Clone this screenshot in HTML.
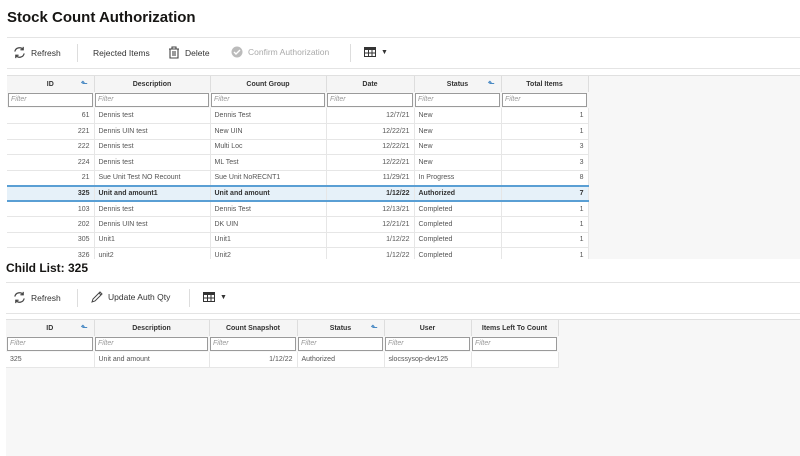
<!DOCTYPE html>
<html><head><meta charset="utf-8"><style>
*{margin:0;padding:0;box-sizing:border-box}
body{width:800px;height:456px;overflow:hidden;background:#fff;font-family:"Liberation Sans",sans-serif;color:#333;position:relative}
h1{position:absolute;left:7px;top:9px;font-size:15px;font-weight:bold;color:#161513}
h2{position:absolute;left:6px;top:261px;font-size:12px;font-weight:bold;color:#161513}
.line{position:absolute;height:1px;background:#e4e4e4}
.tb{position:absolute;font-size:8.5px;color:#333;display:flex;align-items:center;gap:5px}
.sep{position:absolute;width:1px;background:#ddd}
.grid{position:absolute;background:#f7f7f7;border-top:1px solid #e0e0e0;overflow:hidden}
table{border-collapse:collapse;font-size:7px;table-layout:fixed}
th{height:16px;font-weight:bold;color:#333;border-right:1px solid #ddd;background:#f5f5f5;font-size:7px;position:relative}
td.f{height:16px;padding:1px}
td.f div{border:1px solid #9a9a9a;height:14px;background:#fff;font-style:italic;color:#999;padding-left:2px;line-height:12px;font-size:7px}
tr.r td{height:15.5px;background:#fff;border-right:1px solid #e6e6e6;border-bottom:1px solid #e6e6e6;padding:0 4px;white-space:nowrap;overflow:hidden;color:#555}
tr.sel td{background:#e6f1f9;font-weight:bold;color:#333;border-top:2px solid #5a9fd4;border-bottom:2px solid #5a9fd4}
.n{text-align:right}
.ar{position:absolute;right:6px;top:3px;color:#4a8ac4;font-size:8px}
</style></head><body>
<h1>Stock Count Authorization</h1>
<div class="line" style="left:7px;top:37px;width:793px"></div>
<div class="tb" style="left:13px;top:46px"><svg width="13" height="13" viewBox="0 0 14 14" fill="none" stroke="#444" stroke-width="1.3"><path d="M2 6a5 5 0 0 1 9-2M12 8a5 5 0 0 1-9 2"/><path d="M11 1v3h-3M3 13v-3h3"/></svg><span>Refresh</span></div>
<div class="sep" style="left:77px;top:44px;height:18px"></div>
<div class="tb" style="left:93px;top:48px">Rejected Items</div>
<div class="tb" style="left:168px;top:46px"><svg width="12" height="13" viewBox="0 0 12 13" fill="none" stroke="#444" stroke-width="1.1"><path d="M1 3h10M4 3V1h4v2M2 3v9h8V3M5 5v5M7 5v5"/></svg><span>Delete</span></div>
<div class="tb" style="left:231px;top:46px;color:#aaa"><svg width="12" height="12" viewBox="0 0 12 12"><circle cx="6" cy="6" r="5.5" fill="#bbb"/><path d="M3 6l2 2 4-4" stroke="#fff" stroke-width="1.4" fill="none"/></svg><span>Confirm Authorization</span></div>
<div class="sep" style="left:350px;top:44px;height:18px"></div>
<div class="tb" style="left:364px;top:47px"><svg width="12" height="10" viewBox="0 0 12 10"><rect x=".5" y=".5" width="11" height="9" fill="none" stroke="#333"/><rect x=".5" y=".5" width="11" height="2.5" fill="#333"/><path d="M4.5 3v7M8 3v7M0 6h12" stroke="#333"/></svg><span style="font-size:7px">▼</span></div>
<div class="line" style="left:7px;top:68px;width:793px"></div>

<div class="grid" style="left:7px;top:75px;width:793px;height:184px">
<table style="width:581px">
<colgroup><col style="width:87px"><col style="width:116px"><col style="width:116px"><col style="width:88px"><col style="width:87px"><col style="width:87px"></colgroup>
<tr><th>ID<span class="ar">⬑</span></th><th>Description</th><th>Count Group</th><th>Date</th><th>Status<span class="ar">⬑</span></th><th>Total Items</th></tr>
<tr><td class="f"><div>Filter</div></td><td class="f"><div>Filter</div></td><td class="f"><div>Filter</div></td><td class="f"><div>Filter</div></td><td class="f"><div>Filter</div></td><td class="f"><div>Filter</div></td></tr>
<tr class="r"><td class="n">61</td><td>Dennis test</td><td>Dennis Test</td><td class="n">12/7/21</td><td>New</td><td class="n">1</td></tr>
<tr class="r"><td class="n">221</td><td>Dennis UIN test</td><td>New UIN</td><td class="n">12/22/21</td><td>New</td><td class="n">1</td></tr>
<tr class="r"><td class="n">222</td><td>Dennis test</td><td>Multi Loc</td><td class="n">12/22/21</td><td>New</td><td class="n">3</td></tr>
<tr class="r"><td class="n">224</td><td>Dennis test</td><td>ML Test</td><td class="n">12/22/21</td><td>New</td><td class="n">3</td></tr>
<tr class="r"><td class="n">21</td><td>Sue Unit Test NO Recount</td><td>Sue Unit NoRECNT1</td><td class="n">11/29/21</td><td>In Progress</td><td class="n">8</td></tr>
<tr class="r sel"><td class="n">325</td><td>Unit and amount1</td><td>Unit and amount</td><td class="n">1/12/22</td><td>Authorized</td><td class="n">7</td></tr>
<tr class="r"><td class="n">103</td><td>Dennis test</td><td>Dennis Test</td><td class="n">12/13/21</td><td>Completed</td><td class="n">1</td></tr>
<tr class="r"><td class="n">202</td><td>Dennis UIN test</td><td>DK UIN</td><td class="n">12/21/21</td><td>Completed</td><td class="n">1</td></tr>
<tr class="r"><td class="n">305</td><td>Unit1</td><td>Unit1</td><td class="n">1/12/22</td><td>Completed</td><td class="n">1</td></tr>
<tr class="r"><td class="n">326</td><td>unit2</td><td>Unit2</td><td class="n">1/12/22</td><td>Completed</td><td class="n">1</td></tr>
</table></div>

<h2>Child List: 325</h2>
<div class="line" style="left:6px;top:282px;width:794px"></div>
<div class="tb" style="left:13px;top:291px"><svg width="13" height="13" viewBox="0 0 14 14" fill="none" stroke="#444" stroke-width="1.3"><path d="M2 6a5 5 0 0 1 9-2M12 8a5 5 0 0 1-9 2"/><path d="M11 1v3h-3M3 13v-3h3"/></svg><span>Refresh</span></div>
<div class="sep" style="left:77px;top:289px;height:18px"></div>
<div class="tb" style="left:91px;top:291px"><svg width="12" height="12" viewBox="0 0 12 12" fill="none" stroke="#444" stroke-width="1"><path d="M1 11l1-3 7-7 2 2-7 7zM8 2l2 2"/></svg><span>Update Auth Qty</span></div>
<div class="sep" style="left:189px;top:289px;height:18px"></div>
<div class="tb" style="left:203px;top:292px"><svg width="12" height="10" viewBox="0 0 12 10"><rect x=".5" y=".5" width="11" height="9" fill="none" stroke="#333"/><rect x=".5" y=".5" width="11" height="2.5" fill="#333"/><path d="M4.5 3v7M8 3v7M0 6h12" stroke="#333"/></svg><span style="font-size:7px">▼</span></div>
<div class="line" style="left:6px;top:313px;width:794px"></div>

<div class="grid" style="left:6px;top:319px;width:794px;height:137px">
<table style="width:552px">
<colgroup><col style="width:88px"><col style="width:115px"><col style="width:88px"><col style="width:87px"><col style="width:87px"><col style="width:87px"></colgroup>
<tr><th>ID<span class="ar">⬑</span></th><th>Description</th><th>Count Snapshot</th><th>Status<span class="ar">⬑</span></th><th>User</th><th>Items Left To Count</th></tr>
<tr><td class="f"><div>Filter</div></td><td class="f"><div>Filter</div></td><td class="f"><div>Filter</div></td><td class="f"><div>Filter</div></td><td class="f"><div>Filter</div></td><td class="f"><div>Filter</div></td></tr>
<tr class="r"><td>325</td><td>Unit and amount</td><td class="n">1/12/22</td><td>Authorized</td><td>slocssysop-dev125</td><td></td></tr>
</table></div>
</body></html>
